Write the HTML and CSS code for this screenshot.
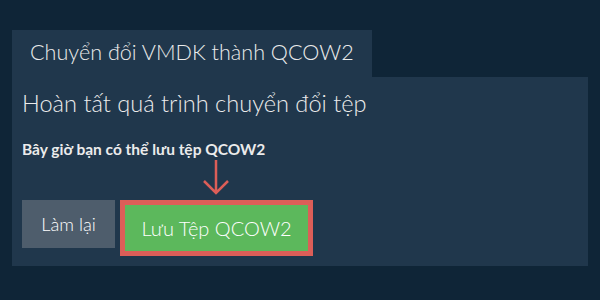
FILE: index.html
```html
<!DOCTYPE html>
<html lang="vi">
<head>
    <meta charset="UTF-8">
    <meta name="viewport" content="width=device-width, initial-scale=1.0">
    <title>Chuyển đổi VMDK thành QCOW2</title>

    <link rel="stylesheet" href="styles.css">
</head>
<body>
    <div class="container">
        <div class="tab">Chuyển đổi VMDK thành QCOW2</div>
        <div class="panel">
            <h2 class="done-title">Hoàn tất quá trình chuyển đổi tệp</h2>
            <p class="done-text">Bây giờ bạn có thể lưu tệp QCOW2</p>
            <div class="button-row">
                <button class="btn btn-gray" type="button">Làm lại</button>
                <div class="save-wrap">
                    <svg class="arrow" width="28" height="36" viewBox="0 0 28 36">
                        <path d="M14 0 V33 M2 21 L14 33 L26 21" fill="none" stroke="#dc5e58" stroke-width="2.5"/>
                    </svg>
                    <button class="btn btn-green" type="button">Lưu Tệp QCOW2</button>
                </div>
            </div>
        </div>
    </div>
</body>
</html>
```
FILE: styles.css
```css
body{
    margin:0;
    background-color:#0f2537;
    font-family:Lato, "Liberation Sans", sans-serif;
    color:#ebebeb;
}
div.container{
    padding:30px 12px 0 12px;
}
div.tab{
    display:inline-block;
    height:47px;
    line-height:44px;
    padding:0 18px;
    background-color:#20374c;
    font-size:21.6px;
    font-weight:300;
}
div.panel{
    background-color:#20374c;
    height:189px;
    box-sizing:border-box;
    padding:10px 10px 0 10px;
}
h2.done-title{
    margin:0;
    font-size:23.6px;
    font-weight:300;
    line-height:33px;
}
p.done-text{
    margin:19px 0 0 0;
    font-size:15.5px;
    font-weight:bold;
    line-height:20px;
}
div.button-row{
    display:flex;
    align-items:flex-start;
    gap:5px;
    margin-top:41px;
}
button.btn{
    border:none;
    font-family:Lato, "Liberation Sans", sans-serif;
    font-size:18.3px;
    font-weight:300;
    color:#ffffff;
    padding:0;
}
button.btn-gray{
    width:93px;
    height:48px;
    background-color:#4e5d6c;
}
div.save-wrap{
    position:relative;
}
svg.arrow{
    position:absolute;
    left:82px;
    bottom:100%;
    margin-bottom:4px;
}
button.btn-green{
    width:193px;
    height:56px;
    font-size:20px;
    background-color:#5cb85c;
    border:5px solid #dc5e58;
    box-sizing:border-box;
}
```
